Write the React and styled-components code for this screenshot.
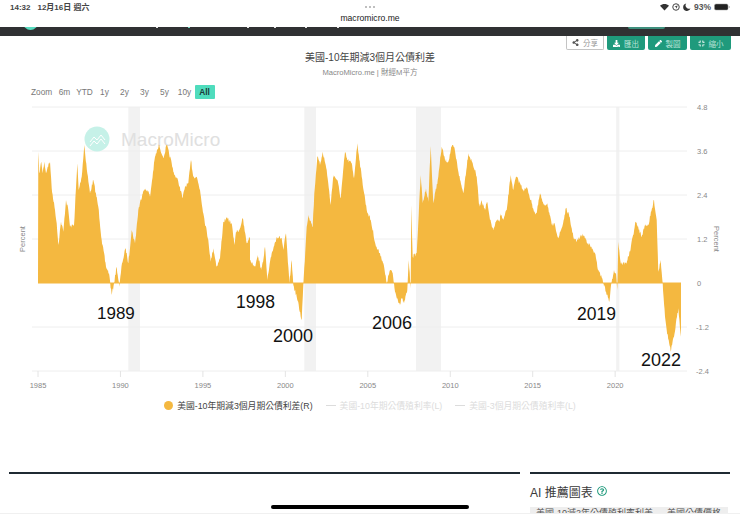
import React from "react";
import styled, { createGlobalStyle } from "styled-components";
import { FaShareAlt, FaDownload, FaPen, FaCompress, FaRegQuestionCircle } from "react-icons/fa";

const GlobalStyle = createGlobalStyle`
    html, body {
        margin: 0;
        padding: 0;
        background: #fff;
    }
    body {
        font-family: "Liberation Sans", "Noto Sans CJK TC", sans-serif;
    }
`;

const Page = styled.div`
    position: relative;
    width: 740px;
    height: 514px;
    overflow: hidden;
    background: #fff;
    display: flex;
    flex-direction: column;
`;

const StatusBar = styled.div`
    height: 27px;
    flex: none;
    display: grid;
    grid-template-columns: 1fr auto 1fr;
    padding: 0 10px;
    color: #222;
    font-size: 8px;
`;

const StatusLeft = styled.div`
    display: flex;
    gap: 7px;
    padding-top: 3px;
    font-weight: 700;
    color: #444;
    line-height: 9px;
`;

const StatusCenter = styled.div`
    display: flex;
    flex-direction: column;
    align-items: center;
    gap: 5px;
    padding-top: 6px;
    font-size: 8.6px;
    line-height: 10px;
`;

const Dots = styled.div`
    display: flex;
    gap: 2px;
    height: 2px;
`;

const Dot = styled.span`
    width: 2px;
    height: 2px;
    border-radius: 50%;
    background: #aaa;
`;

const StatusRight = styled.div`
    display: flex;
    justify-content: flex-end;
    align-items: flex-start;
    gap: 3px;
    padding-top: 3px;
    color: #555;
    font-size: 8.5px;
    font-weight: 700;
    line-height: 9px;
    svg {
        display: block;
    }
`;

const NavBar = styled.div`
    height: 9px;
    flex: none;
    background: #303133;
    overflow: hidden;
    display: flex;
    align-items: flex-start;
`;

const NavLogo = styled.span`
    flex: none;
    width: 15px;
    height: 15px;
    margin: -12px 0 0 23px;
    border-radius: 50%;
    background: #58dcc0;
`;

const NavDot = styled.span`
    flex: none;
    width: 2px;
    height: 1px;
    margin-left: ${(props) => props.$gap}px;
    background: ${(props) => props.$color || "#e8e8e8"};
`;

const NavPill = styled.span`
    flex: none;
    width: 37px;
    height: 2px;
    margin-left: 289px;
    border-radius: 0 0 6px 6px;
    background: #3f8f7d;
`;

const Toolbar = styled.div`
    height: 14px;
    flex: none;
    display: flex;
    justify-content: flex-end;
    gap: 3px;
    padding-right: 9px;
`;

const ToolButton = styled.div`
    width: ${(props) => props.$width}px;
    box-sizing: border-box;
    display: flex;
    align-items: center;
    justify-content: center;
    gap: 4px;
    font-size: 7.5px;
    border-radius: 0 0 2px 2px;
    color: ${(props) => (props.$light ? "#999" : "#b9e5da")};
    background: ${(props) => (props.$light ? "#fff" : "#1f9a7c")};
    border: ${(props) => (props.$light ? "1px solid #c4c4c4" : "none")};
    border-top: none;
    svg {
        width: 7px;
        height: 7px;
        color: ${(props) => (props.$light ? "#555" : "#fff")};
    }
`;

const Title = styled.div`
    margin-top: 1px;
    height: 14px;
    line-height: 14px;
    text-align: center;
    font-size: 10px;
    color: #444;
`;

const SubTitle = styled.div`
    margin-top: 3px;
    height: 10px;
    line-height: 10px;
    text-align: center;
    font-size: 7.6px;
    color: #888;
`;

const RangeRow = styled.div`
    margin-top: 7px;
    height: 14px;
    display: flex;
    align-items: center;
    padding-left: 31px;
    font-size: 8.3px;
    color: #777;
`;

const RangeLabel = styled.span`
    width: 23.5px;
`;

const RangeButton = styled.span`
    width: 20px;
    height: 14px;
    line-height: 14px;
    text-align: center;
    border-radius: 1px;
    color: ${(props) => (props.$active ? "#1d3a3a" : "#777")};
    font-weight: ${(props) => (props.$active ? 700 : 400)};
    background: ${(props) => (props.$active ? "#4fdcbd" : "transparent")};
`;

const ChartSvg = styled.svg`
    display: block;
    flex: none;
    width: 740px;
    height: 295px;
    margin-top: 1px;
`;

const AxisText = styled.text`
    font-family: "Liberation Sans", sans-serif;
    font-size: 7.5px;
    fill: #888;
`;

const Watermark = styled.text`
    font-family: "Liberation Sans", sans-serif;
    font-size: 19px;
    fill: #e0e0e0;
`;

const YearNote = styled.text`
    font-family: "Liberation Sans", sans-serif;
    font-size: ${(props) => props.$size}px;
    fill: #111;
`;

const Legend = styled.div`
    margin-top: 4px;
    height: 14px;
    display: flex;
    align-items: center;
    justify-content: center;
    font-size: 8.8px;
`;

const LegendItem = styled.div`
    display: flex;
    align-items: center;
    margin-left: ${(props) => props.$gap}px;
    color: ${(props) => (props.$off ? "#dcdcdc" : "#444")};
`;

const LegendDot = styled.span`
    width: 9px;
    height: 9px;
    margin-right: 4px;
    border-radius: 50%;
    background: #f4b840;
`;

const LegendDash = styled.span`
    width: 10px;
    height: 1px;
    margin-right: 4px;
    background: #dcdcdc;
`;

const Bottom = styled.div`
    margin-top: 60px;
    display: grid;
    grid-template-columns: 511px 200px;
    column-gap: 10px;
    padding-left: 9px;
`;

const Column = styled.div`
    border-top: 2px solid #1f2a33;
`;

const Heading = styled.div`
    display: flex;
    align-items: center;
    gap: 4px;
    margin-top: 9px;
    height: 16px;
    font-size: 12px;
    color: #3a3a3a;
    svg {
        width: 10px;
        height: 10px;
        color: #1f9a7c;
    }
`;

const Chip = styled.div`
    margin-top: 8px;
    height: 20px;
    width: 198px;
    padding: 1px 6px;
    box-sizing: border-box;
    background: #eeeeee;
    color: #555;
    font-size: 9px;
    line-height: 11px;
    white-space: nowrap;
    overflow: hidden;
`;

const HomeBar = styled.div`
    position: absolute;
    left: 271px;
    top: 505px;
    width: 198px;
    height: 4px;
    border-radius: 2px;
    background: #000;
`;

const BottomEdge = styled.div`
    position: absolute;
    left: 0;
    right: 0;
    bottom: 0;
    height: 1px;
    background: #f0f0f0;
`;

// points read off the picture, in crop coords (3x), [x, y]
const partA = [[113,520],[115,125],[118,190],[124,155],[128,190],[133,155],[138,190],[143,170],[150,155],[155,235],[165,300],[170,340],[175,405],[183,335],[190,365],[198,270],[205,300],[210,350],[222,345],[232,160],[236,240],[245,200],[253,105],[262,190],[270,250],[280,210],[295,290],[305,390],[318,470],[327,490],[335,555],[342,520],[350,470],[358,530],[366,460],[377,415],[385,460],[395,360],[405,400],[415,300],[430,240],[443,240],[450,260],[465,140],[478,105],[490,145],[500,105],[515,160],[520,185],[535,215],[548,265],[555,230],[565,220],[573,150],[580,200],[590,200],[600,240],[610,310],[625,390],[632,455],[640,415],[650,470],[660,445],[670,335],[680,325],[695,340],[703,405],[708,365],[718,360],[728,325],[740,400],[750,380]];
const partB = [[0,450],[15,470],[22,435],[35,480],[45,410],[52,510],[65,430],[80,380],[95,385],[100,420],[108,370],[118,520],[125,450],[130,525],[140,560],[155,630],[160,525],[170,350],[175,315],[188,350],[193,250],[202,140],[210,165],[218,125],[230,180],[242,285],[250,195],[262,210],[272,265],[285,125],[292,150],[305,160],[312,205],[322,100],[335,200],[350,300],[362,330],[378,410],[390,430],[400,460],[410,520],[420,480],[428,490],[435,545],[450,585],[455,565],[462,580],[472,540],[476,450],[482,535],[484,285],[488,440],[500,430],[512,195],[518,280],[528,235],[535,275],[542,108],[550,280],[565,200],[575,110],[585,150],[595,155],[605,110],[612,110],[630,210],[640,250],[655,130],[668,160],[680,200],[688,290],[695,270],[705,300],[711,275],[720,330],[730,360],[738,335],[750,330]];
const partC = [[30,310],[40,330],[50,300],[62,195],[70,240],[78,200],[90,220],[100,240],[112,235],[125,280],[135,310],[140,310],[150,250],[160,285],[172,280],[185,345],[195,345],[205,385],[218,345],[228,295],[238,320],[250,380],[260,395],[270,380],[280,375],[295,400],[315,430],[322,470],[338,510],[348,545],[358,575],[365,515],[372,480],[378,490],[382,540],[385,395],[392,460],[408,460],[420,425],[437,335],[455,380],[465,345],[475,345],[492,270],[500,330],[505,485],[512,450],[518,520],[525,620],[530,660],[542,725],[552,680],[565,595],[573,680],[573,520]];

const toPage = (points, left) =>
    points.map(([x, y]) => [left + x / 3, 110 + y / 3]);

const outline = [...toPage(partA, 0), ...toPage(partB, 250), ...toPage(partC, 490)];

function buildArea() {
    let seed = 7;
    const rand = () => {
        seed = (seed * 16807) % 2147483647;
        return seed / 2147483647 - 0.5;
    };
    let d = `M38 283`;
    for (let i = 1; i < outline.length; i++) {
        const [x0, y0] = outline[i - 1];
        const [x1, y1] = outline[i];
        const steps = Math.max(1, Math.round((x1 - x0) / 0.5));
        for (let s = 1; s <= steps; s++) {
            const t = s / steps;
            const y = y0 + (y1 - y0) * t;
            // the series is daily, so keep it jagged between the read points
            const jitter = s === steps ? 0 : rand() * 4;
            d += `L${(x0 + (x1 - x0) * t).toFixed(1)} ${(y + jitter).toFixed(1)}`;
        }
    }
    return d + "L681 283Z";
}

const areaPath = buildArea();
const gridLines = [107, 151, 195, 239, 327, 371];
const yLabels = [["4.8", 107], ["3.6", 151], ["2.4", 195], ["1.2", 239], ["0", 283], ["-1.2", 327], ["-2.4", 371]];
const xLabels = [1985, 1990, 1995, 2000, 2005, 2010, 2015, 2020];
const bands = [[128.3, 11.7], [304.3, 11.7], [416, 25], [616.2, 3.2]];
const notes = [["1989", 97, 319, 17], ["1998", 236, 308, 17.5], ["2000", 273, 342, 18], ["2006", 372, 329, 18], ["2019", 577, 320, 17.5], ["2022", 641, 366, 18]];
const ranges = ["6m", "YTD", "1y", "2y", "3y", "5y", "10y", "All"];
const navDots = [[118], [30, "#6fd8c2"], [57], [25], [29], [30]];

export default function App() {
    return (
        <Page>
            <GlobalStyle />
            <StatusBar>
                <StatusLeft>
                    <span>14:32</span>
                    <span>12月16日 週六</span>
                </StatusLeft>
                <StatusCenter>
                    <Dots>
                        <Dot />
                        <Dot />
                        <Dot />
                    </Dots>
                    <span>macromicro.me</span>
                </StatusCenter>
                <StatusRight>
                    <svg width="9" height="8" viewBox="0 0 18 16">
                        <path d="M9 15L0 5.5C5 .5 13 .5 18 5.5Z" fill="#333" />
                    </svg>
                    <svg width="8" height="8" viewBox="0 0 16 16">
                        <circle cx="8" cy="8" r="6.5" fill="none" stroke="#444" strokeWidth="2" />
                        <path d="M11.5 4.5L9 11.5 8 8.5 5 7.5Z" fill="#444" />
                    </svg>
                    <svg width="8" height="8" viewBox="0 0 16 16">
                        <path d="M6.5 1A7.5 7.5 0 1 0 15 10.5 6.5 6.5 0 0 1 6.5 1Z" fill="#333" />
                    </svg>
                    <span>93%</span>
                    <svg width="16" height="8" viewBox="0 0 32 16">
                        <rect x="1" y="2" width="27" height="12" rx="3" fill="#222" stroke="#999" />
                        <rect x="29.5" y="6" width="1.5" height="4" fill="#999" />
                    </svg>
                </StatusRight>
            </StatusBar>

            <NavBar>
                <NavLogo />
                {navDots.map(([gap, color], index) => (
                    <NavDot key={index} $gap={gap} $color={color} />
                ))}
                <NavPill />
            </NavBar>

            <Toolbar>
                <ToolButton $light $width={38}>
                    <FaShareAlt />
                    分享
                </ToolButton>
                <ToolButton $width={38}>
                    <FaDownload />
                    匯出
                </ToolButton>
                <ToolButton $width={39}>
                    <FaPen />
                    製圖
                </ToolButton>
                <ToolButton $width={41}>
                    <FaCompress />
                    縮小
                </ToolButton>
            </Toolbar>

            <Title>美國-10年期減3個月公債利差</Title>
            <SubTitle>MacroMicro.me | 財經M平方</SubTitle>

            <RangeRow>
                <RangeLabel>Zoom</RangeLabel>
                {ranges.map((range) => (
                    <RangeButton key={range} $active={range === "All"}>
                        {range}
                    </RangeButton>
                ))}
            </RangeRow>

            <ChartSvg viewBox="0 100 740 295">
                {bands.map(([x, width]) => (
                    <rect key={x} x={x} y="107" width={width} height="264" fill="#f2f2f2" />
                ))}
                {gridLines.map((y) => (
                    <line key={y} x1="32" x2="687" y1={y} y2={y} stroke="#eeeeee" strokeWidth="1" />
                ))}
                <circle cx="97" cy="139" r="12.5" fill="#c6f1e8" />
                <path d="M90 142l4-5 3 3 4-5 4 5M90 146l4-5 3 3 4-5 4 5" fill="none" stroke="#fff" strokeWidth="1" />
                <Watermark x="121" y="146">MacroMicro</Watermark>

                <path d={areaPath} fill="#f4b840" />
                <line x1="38" x2="681" y1="283" y2="283" stroke="#f4b840" strokeWidth="1" />

                {xLabels.map((year, index) => {
                    const x = 38 + index * 82.45;
                    return (
                        <g key={year}>
                            <line x1={x} x2={x} y1="371" y2="377" stroke="#e4e4e4" strokeWidth="1" />
                            <AxisText x={x} y="388" textAnchor="middle">{year}</AxisText>
                        </g>
                    );
                })}
                {yLabels.map(([label, y]) => (
                    <AxisText key={label} x={label.startsWith("-") ? 696 : 697} y={y + 3}>{label}</AxisText>
                ))}
                <AxisText x="22" y="239" textAnchor="middle" transform="rotate(-90 22 239)" dy="3">Percent</AxisText>
                <AxisText x="717" y="239" textAnchor="middle" transform="rotate(90 717 239)" dy="3">Percent</AxisText>

                {notes.map(([label, x, y, size]) => (
                    <YearNote key={label} x={x} y={y} $size={size}>{label}</YearNote>
                ))}
            </ChartSvg>

            <Legend>
                <LegendItem $gap={0}>
                    <LegendDot />
                    美國-10年期減3個月期公債利差(R)
                </LegendItem>
                <LegendItem $off $gap={13}>
                    <LegendDash />
                    美國-10年期公債殖利率(L)
                </LegendItem>
                <LegendItem $off $gap={13}>
                    <LegendDash />
                    美國-3個月期公債殖利率(L)
                </LegendItem>
            </Legend>

            <Bottom>
                <Column />
                <Column>
                    <Heading>
                        AI 推薦圖表
                        <FaRegQuestionCircle />
                    </Heading>
                    <Chip>美國-10減2年公債殖利率利差 — 美國公債價格</Chip>
                </Column>
            </Bottom>

            <BottomEdge />
            <HomeBar />
        </Page>
    );
}
